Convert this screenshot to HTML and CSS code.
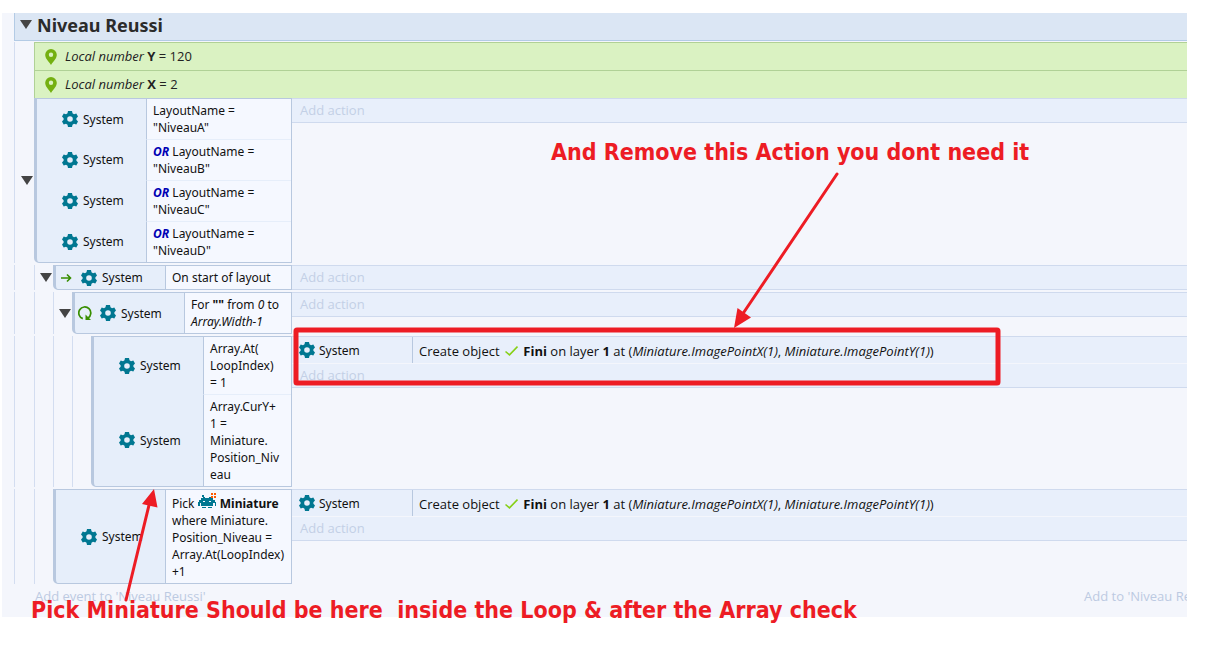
FILE: index.html
```html
<!DOCTYPE html>
<html lang="en">
<head>
  <meta charset="UTF-8" />
  <meta name="viewport" content="width=device-width, initial-scale=1.0" />
  <title>Niveau Reussi</title>
  <link rel="stylesheet" href="styles.css">
</head>
<body>
  <!-- shared icons -->
  <svg class="defs" width="0" height="0" aria-hidden="true">
    <symbol id="gear" viewBox="0 0 16 16">
      <path fill="#007791" fill-rule="evenodd" d="M6 0h4l.5 2.300 1.500.9 2.300-.8 1.700 3L14.400 7.200v1.600l1.600 1.800-1.700 3-2.300-.8-1.500.9L10 16H6l-.5-2.300-1.500-.9-2.300.8L0 10.600 1.600 8.800V7.200L0 5.400l1.700-3 2.300.8 1.500-.9zM8 5.200a2.800 2.800 0 1 0 0 5.600 2.800 2.800 0 0 0 0-5.600z"/>
    </symbol>
    <symbol id="pin" viewBox="0 0 12 16">
      <path fill="#74b010" fill-rule="evenodd" d="M6 0a5.800 5.800 0 0 0-5.800 5.800C.2 9.500 3 11.500 6 16c3-4.500 5.800-6.500 5.800-10.200A5.800 5.800 0 0 0 6 0zm0 3.600a2.200 2.200 0 1 1 0 4.400 2.200 2.200 0 0 1 0-4.400z"/>
    </symbol>
    <symbol id="check" viewBox="0 0 13 10">
      <path fill="none" stroke="#86d016" stroke-width="1.600" d="M.5 5.500l4 3.300L12.500.6"/>
    </symbol>
    <symbol id="caret" viewBox="0 0 12 9">
      <path fill="#444" d="M0 0h12L6 9z"/>
    </symbol>
  </svg>

  <main class="page">
    <div class="sheet">
      <div class="group">
        <button class="toggle" aria-label="Collapse group"><svg width="12" height="9"><use href="#caret"/></svg></button>
        <h1>Niveau Reussi</h1>
      </div>

      <div class="event">
        <div class="guide"></div>
        <div class="vars">
          <div class="var"><svg width="12" height="16"><use href="#pin"/></svg><span><i>Local number</i> <b>Y</b> = 120</span></div>
          <div class="var"><svg width="12" height="16"><use href="#pin"/></svg><span><i>Local number</i> <b>X</b> = 2</span></div>
        </div>
      </div>

      <div class="event">
        <div class="left">
          <div class="guide"><button class="toggle" aria-label="Collapse event"><svg width="12" height="9"><use href="#caret"/></svg></button></div>
          <div class="block">
            <div class="cond"><div class="object"><span class="slot"></span><svg width="16" height="16"><use href="#gear"/></svg>System</div><div class="text">LayoutName =<br>"NiveauA"</div></div>
            <div class="cond"><div class="object"><span class="slot"></span><svg width="16" height="16"><use href="#gear"/></svg>System</div><div class="text"><em class="or">OR</em> LayoutName =<br>"NiveauB"</div></div>
            <div class="cond"><div class="object"><span class="slot"></span><svg width="16" height="16"><use href="#gear"/></svg>System</div><div class="text"><em class="or">OR</em> LayoutName =<br>"NiveauC"</div></div>
            <div class="cond"><div class="object"><span class="slot"></span><svg width="16" height="16"><use href="#gear"/></svg>System</div><div class="text"><em class="or">OR</em> LayoutName =<br>"NiveauD"</div></div>
          </div>
        </div>
        <div class="actions"><button class="add">Add action</button></div>
      </div>

      <div class="event gap">
        <div class="left">
          <div class="guide"></div>
          <div class="guide inner"><button class="toggle" aria-label="Collapse event"><svg width="12" height="9"><use href="#caret"/></svg></button></div>
          <div class="block">
            <div class="cond"><div class="object"><span class="slot"><svg width="12" height="10" viewBox="0 0 12 10"><path fill="none" stroke="#388e00" stroke-width="1.600" d="M1 5h9M7 1.500L10.500 5 7 8.500"/></svg></span><svg width="16" height="16"><use href="#gear"/></svg>System</div><div class="text">On start of layout</div></div>
          </div>
        </div>
        <div class="actions"><button class="add">Add action</button></div>
      </div>

      <div class="event gap">
        <div class="left">
          <div class="guide"></div>
          <div class="guide inner"></div>
          <div class="guide inner"><button class="toggle" aria-label="Collapse event"><svg width="12" height="9"><use href="#caret"/></svg></button></div>
          <div class="block">
            <div class="cond"><div class="object"><span class="slot"><svg width="14" height="14" viewBox="0 0 14 14"><path fill="none" stroke="#388e00" stroke-width="1.700" d="M4.800 12.600A6 6 0 1 1 10 12"/><path fill="#388e00" d="M7.500 8.500V14H13z"/></svg></span><svg width="16" height="16"><use href="#gear"/></svg>System</div><div class="text">For <b>""</b> from <i>0</i> to<br><i>Array.Width-1</i></div></div>
          </div>
        </div>
        <div class="actions"><button class="add">Add action</button></div>
      </div>

      <div class="event gap">
        <div class="left">
          <div class="guide"></div>
          <div class="guide inner"></div>
          <div class="guide inner"></div>
          <div class="guide inner"></div>
          <div class="block">
            <div class="cond"><div class="object"><span class="slot"></span><svg width="16" height="16"><use href="#gear"/></svg>System</div><div class="text">Array.At(<br>LoopIndex)<br>= 1</div></div>
            <div class="cond"><div class="object"><span class="slot"></span><svg width="16" height="16"><use href="#gear"/></svg>System</div><div class="text">Array.CurY+<br>1 =<br>Miniature.<br>Position_Niv<br>eau</div></div>
          </div>
        </div>
        <div class="actions">
          <div class="action">
            <div class="target"><svg width="16" height="16"><use href="#gear"/></svg>System</div>
            <div class="detail">Create object <svg class="check" width="13" height="10"><use href="#check"/></svg> <b>Fini</b> on layer <b>1</b> at (<i>Miniature.ImagePointX(1)</i>, <i>Miniature.ImagePointY(1)</i>)</div>
          </div>
          <button class="add">Add action</button>
        </div>
      </div>

      <div class="event gap">
        <div class="left">
          <div class="guide"></div>
          <div class="guide inner"></div>
          <div class="block">
            <div class="cond"><div class="object"><span class="slot"></span><svg width="16" height="16"><use href="#gear"/></svg>System</div><div class="text">Pick <svg class="sprite" width="19" height="16" viewBox="0 0 19 16" shape-rendering="crispEdges"><path fill="#007791" d="M4 2h2v2H4zM5 4h2v1H5zM11 4h2v1h-2zM3 5h12v2h2v2h1v4h-1v-3h-2v3H3v-3H2v3H0V9h1V7h2zM4 14h4v1H4zM10 14h4v1h-4z"/><path fill="#f5f8ff" d="M5 8h2v1H5zM11 8h2v1h-2z"/><path fill="#ff5a00" d="M13 0h2v2h-2zM16 0h2v2h-2zM13 3h2v2h-2zM16 3h2v2h-2z"/></svg> <b>Miniature</b><br>where Miniature.<br>Position_Niveau =<br>Array.At(LoopIndex)<br>+1</div></div>
          </div>
        </div>
        <div class="actions">
          <div class="action">
            <div class="target"><svg width="16" height="16"><use href="#gear"/></svg>System</div>
            <div class="detail">Create object <svg class="check" width="13" height="10"><use href="#check"/></svg> <b>Fini</b> on layer <b>1</b> at (<i>Miniature.ImagePointX(1)</i>, <i>Miniature.ImagePointY(1)</i>)</div>
          </div>
          <button class="add">Add action</button>
        </div>
      </div>

      <div class="footer">
        <button class="add-event">Add event to 'Niveau Reussi'</button>
        <button class="add-event">Add to 'Niveau Re</button>
      </div>
    </div>

    <!-- red notes drawn over the sheet -->
    <svg class="marks" width="1010" height="620" viewBox="0 0 1010 620" aria-hidden="true">
      <g fill="none" stroke="#ed1c24">
        <rect x="296" y="330" width="702" height="53" rx="1" stroke-width="5"/>
        <path stroke-width="3" stroke-linecap="round" d="M837 174L742 315M126 600L150 501"/>
      </g>
      <path fill="#ed1c24" d="M734 328l3.500-20 13.500 9.500zM154 489l-12 15 15.500 3.500z"/>
    </svg>
    <p class="note note-remove">And Remove this Action you dont need it</p>
    <p class="note note-pick">Pick Miniature Should be here&nbsp; inside the Loop &amp; after the Array check</p>
  </main>
</body>
</html>
```
FILE: styles.css
```css
* {
  margin: 0;
  padding: 0;
  box-sizing: border-box;
}

body {
  background: white;
  color: #111;
  font-family: "Noto Sans", "Open Sans", sans-serif;
  font-size: 12px;
  line-height: 17px;
}

button {
  border: none;
  background: transparent;
  font: inherit;
  cursor: pointer;
}

svg {
  display: block;
  flex: none;
}

.defs {
  position: absolute;
}

.page {
  position: relative;
  padding: 13px 26px 32px 2px;
}

.sheet {
  background: #f4f6fc;
  padding-left: 12px;
  overflow: hidden;
}

.group {
  display: flex;
  align-items: center;
  gap: 5px;
  height: 28px;
  margin-bottom: 1px;
  padding: 0 0 4px 5px;
  background: #dbe6f4;
  border-left: 1px solid #b3cbe5;
  border-bottom: 1px solid #b3cbe5;
}

h1 {
  font-size: 18px;
  line-height: 22px;
  color: #2b2b2b;
}

.event {
  display: flex;
  align-items: stretch;
}

.gap {
  margin-top: 2px;
}

.left {
  display: flex;
  flex: none;
  width: 278px;
}

.guide {
  display: flex;
  flex: none;
  align-items: center;
  justify-content: flex-end;
  width: 20px;
  padding-right: 1px;
  border-left: 1px solid #d3ddf0;
}

.inner {
  width: 19px;
}

.vars {
  flex: 1;
  border-left: 1px solid #b0d196;
}

.var {
  display: flex;
  align-items: center;
  gap: 8px;
  padding: 5px 10px;
  background: #daf2c2;
  border-top: 1px solid #b0d196;
  color: #222;
}

.var,
.detail,
.add,
.add-event {
  font-family: "Open Sans", "Noto Sans", sans-serif;
  font-size: 13px;
}

.block {
  flex: 1;
  background: #e6eefa;
  border: 1px solid #b8c8df;
  border-left-width: 3px;
  border-bottom-left-radius: 5px;
}

.cond {
  display: flex;
}

.object {
  display: flex;
  flex: none;
  align-items: center;
  gap: 5px;
  width: 109px;
}

.slot {
  display: flex;
  justify-content: center;
  width: 20px;
}

.text {
  flex: 1;
  padding: 3px 0 3px 6px;
  background: #f5f8ff;
  border-left: 1px solid #b8c8df;
  white-space: nowrap;
}

.cond + .cond .text {
  border-top: 1px solid #e6eefa;
}

.or {
  color: #0000b4;
  font-weight: bold;
}

.sprite,
.check {
  display: inline-block;
}

.sprite {
  vertical-align: -1px;
}

.actions {
  flex: 1;
  align-self: flex-start;
  background: #e8effb;
  border-top: 1px solid #cfdaee;
  border-bottom: 1px solid #cfdaee;
}

.action {
  display: flex;
  border-bottom: 1px solid #f4f6fc;
}

.target {
  display: flex;
  flex: none;
  align-items: center;
  gap: 4px;
  width: 120px;
  padding-left: 7px;
}

.detail {
  padding: 6px 0 3px 6px;
  border-left: 1px solid #b8c8df;
  white-space: nowrap;
}

.check {
  margin: 0 2px;
}

.add {
  display: block;
  padding: 3px 8px;
  color: #c3d0e6;
}

.footer {
  display: flex;
  justify-content: space-between;
  margin-right: -4px;
  padding: 4px 0 12px 21px;
}

.add-event {
  color: #bccae2;
  white-space: nowrap;
}

.marks {
  position: absolute;
  top: 0;
  left: 0;
  pointer-events: none;
}

.note {
  position: absolute;
  color: #ed1c24;
  font-family: "DejaVu Sans Condensed", "DejaVu Sans", sans-serif;
  font-size: 23px;
  font-weight: bold;
  line-height: 30px;
  white-space: nowrap;
}

.note-remove {
  top: 137px;
  left: 551px;
}

.note-pick {
  top: 595px;
  left: 31px;
}
```
